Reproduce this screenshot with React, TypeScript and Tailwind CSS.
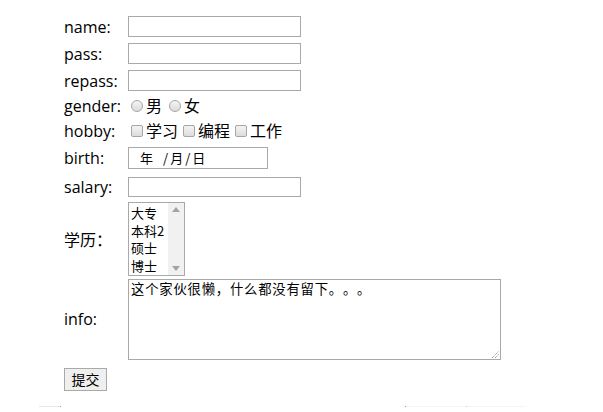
import React from "react";

const lab = "w-16 shrink-0 text-[16px] text-black";
const inp = "h-[21px] w-[173px] border border-[#a9a9a9] bg-white";

function Radio() {
  return (
    <span className="ml-[4px] mr-[3px] inline-block h-[12px] w-[12px] rounded-full border border-[#a6a6a6] bg-gradient-to-b from-[#f4f4f4] to-[#dcdcdc]" />
  );
}
function Check() {
  return (
    <span className="ml-[4px] mr-[3px] inline-block h-[12px] w-[12px] rounded-[2px] border border-[#a6a6a6] bg-gradient-to-b from-[#f4f4f4] to-[#dcdcdc]" />
  );
}

export default function App() {
  return (
    <div
      className="relative h-[412px] w-[603px] bg-white pl-[64px] pt-[13px] text-black"
      style={{ fontFamily: '"Open Sans","Noto Sans CJK SC",sans-serif' }}
    >
      <div className="flex h-[27px] items-center">
        <span className={lab}>name:</span>
        <div className={inp} />
      </div>
      <div className="flex h-[27px] items-center">
        <span className={lab}>pass:</span>
        <div className={inp} />
      </div>
      <div className="flex h-[27px] items-center">
        <span className={lab}>repass:</span>
        <div className={inp} />
      </div>
      <div className="flex h-[24px] items-center">
        <span className={lab}>gender:</span>
        <div className="-ml-[1px] flex items-center text-[16px]">
          <Radio />
          <span>男</span>
          <span className="w-[3px]" />
          <Radio />
          <span>女</span>
        </div>
      </div>
      <div className="flex h-[26px] items-center">
        <span className={lab}>hobby:</span>
        <div className="-ml-[1px] flex items-center text-[16px]">
          <Check />
          <span>学习</span>
          <span className="w-[1px]" />
          <Check />
          <span>编程</span>
          <span className="w-[1px]" />
          <Check />
          <span>工作</span>
        </div>
      </div>
      <div className="flex h-[28px] items-center">
        <span className={lab}>birth:</span>
        <div
          className="flex h-[22px] w-[140px] items-center border border-[#a9a9a9] bg-white pl-[11px] text-[13px]"
          style={{ fontFamily: '"Noto Sans CJK SC",sans-serif' }}
        >
          <span>年</span>
          <span className="ml-[10px]">/</span>
          <span className="ml-[2px]">月</span>
          <span className="ml-[2px]">/</span>
          <span className="ml-[2px]">日</span>
        </div>
      </div>
      <div className="flex h-[29px] items-center">
        <span className={lab}>salary:</span>
        <div className="h-[20px] w-[173px] border border-[#a9a9a9] bg-white" />
      </div>
      <div className="flex h-[76px] items-center">
        <span
          className={lab}
          style={{ fontFamily: '"Noto Sans CJK SC",sans-serif' }}
        >
          学历：
        </span>
        <div
          className="flex h-[74px] w-[57px] border border-[#a9a9a9] bg-white text-[13px]"
          style={{ fontFamily: '"Noto Sans CJK SC",sans-serif' }}
        >
          <div className="flex flex-1 flex-col pl-[2px] pt-[1px]">
            <span className="block h-[17.5px] leading-[17.5px]">大专</span>
            <span className="block h-[17.5px] leading-[17.5px]">本科2</span>
            <span className="block h-[17.5px] leading-[17.5px]">硕士</span>
            <span className="block h-[17.5px] leading-[17.5px]">博士</span>
          </div>
          <div className="flex w-[16px] flex-col items-center justify-between bg-[#f1f1f1] py-[4px]">
            <svg width="8" height="5" viewBox="0 0 8 5">
              <path d="M0 5 L4 0 L8 5 Z" fill="#a3a3a3" />
            </svg>
            <svg width="8" height="5" viewBox="0 0 8 5">
              <path d="M0 0 L4 5 L8 0 Z" fill="#a3a3a3" />
            </svg>
          </div>
        </div>
      </div>
      <div className="flex h-[84px] items-center">
        <span className={lab}>info:</span>
        <div
          className="relative h-[81px] w-[373px] border border-[#a9a9a9] bg-white pl-[2px] pt-[1px] text-[13.33px] leading-[16px] tracking-[0.8px] [text-spacing-trim:space-all]"
          style={{ fontFamily: '"Noto Sans CJK SC",monospace' }}
        >
          这个家伙很懒，什么都没有留下。。。
          <svg
            className="absolute bottom-[1px] right-[1px]"
            width="8"
            height="8"
            viewBox="0 0 8 8"
          >
            <path d="M1 8 L8 1 M4 8 L8 4" stroke="#7a7a7a" strokeWidth="1" strokeDasharray="1 1" />
          </svg>
        </div>
      </div>
      <div className="mt-[7px] flex">
        <button
          className="flex h-[23px] w-[43px] items-center justify-center border border-[#a9a9a9] bg-[#efefef] text-[14px]"
          style={{ fontFamily: '"Noto Sans CJK SC",sans-serif' }}
        >
          提交
        </button>
      </div>
      <div className="mt-[15px] -ml-[25px] flex items-center">
        <div className="h-[1px] w-[21px] bg-[#e6e6e6]" />
        <div className="h-[1px] w-[1px] bg-[#9a9a9a]" />
        <div className="ml-[344px] h-[1px] w-[1px] bg-[#9a9a9a]" />
        <div className="h-[1px] w-[60px] bg-[#f4f4f4]" />
        <div className="h-[1px] w-[1px] bg-[#cccccc]" />
        <div className="h-[1px] w-[58px] bg-[#f4f4f4]" />
      </div>
    </div>
  );
}
